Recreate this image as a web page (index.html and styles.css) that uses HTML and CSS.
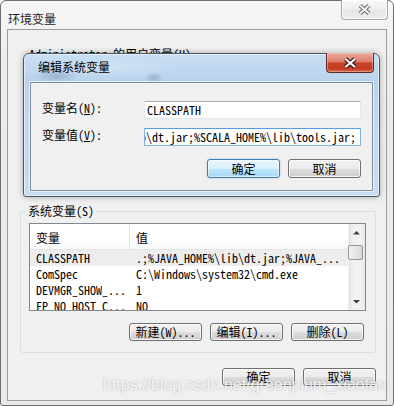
FILE: index.html
```html
<!DOCTYPE html>
<html lang="zh-CN">
<head>
  <meta charset="UTF-8" />
  <title>环境变量</title>
  <link rel="stylesheet" href="styles.css">
</head>
<body>

  <div class="window">
    <div class="titlebar">
      <span class="title">环境变量</span>
    </div>
    <span class="close-btn inactive">
      <svg width="47" height="20" viewBox="0 0 47 20">
        <path d="M19 5.5 L28 13.5 M28 5.5 L19 13.5" stroke="#6f6f6f" stroke-width="4.2" />
        <path d="M19 5.5 L28 13.5 M28 5.5 L19 13.5" stroke="#f2f2f2" stroke-width="2" />
      </svg>
    </span>

    <div class="client">
      <div class="user-group">Administrator 的用户变量(U)</div>

      <fieldset class="group">
        <legend>系统变量(S)</legend>
        <div class="listview">
          <div class="list-body">
            <div class="list-head">
              <span class="col-name">变量</span>
              <span class="col-value">值</span>
            </div>
            <div class="row selected">
              <span class="col-name">CLASSPATH</span>
              <span class="col-value">.;%JAVA_HOME%\lib\dt.jar;%JAVA_...</span>
            </div>
            <div class="row">
              <span class="col-name">ComSpec</span>
              <span class="col-value">C:\Windows\system32\cmd.exe</span>
            </div>
            <div class="row">
              <span class="col-name">DEVMGR_SHOW_...</span>
              <span class="col-value">1</span>
            </div>
            <div class="row">
              <span class="col-name">FP_NO_HOST_C...</span>
              <span class="col-value">NO</span>
            </div>
          </div>
          <div class="scrollbar">
            <div class="arrow">
              <svg width="17" height="17" viewBox="0 0 17 17"><path d="M5 10.5 L8.5 7 L12 10.5 Z" fill="#404040" /></svg>
            </div>
            <div class="thumb"></div>
            <div class="track"></div>
            <div class="arrow">
              <svg width="17" height="17" viewBox="0 0 17 17"><path d="M5 7 L8.5 10.5 L12 7 Z" fill="#404040" /></svg>
            </div>
          </div>
        </div>
        <div class="group-buttons">
          <button class="btn">新建(W)...</button>
          <button class="btn">编辑(I)...</button>
          <button class="btn">删除(L)</button>
        </div>
      </fieldset>

      <div class="dialog-buttons">
        <button class="btn">确定</button>
        <button class="btn">取消</button>
      </div>
    </div>

    <!-- Edit dialog on top of the main window -->
    <div class="edit-dialog">
      <div class="edit-titlebar">编辑系统变量</div>
      <span class="close-btn active">
        <svg width="48" height="20" viewBox="0 0 48 20">
          <path d="M19.5 6 L29 14 M29 6 L19.5 14" stroke="#3b1a14" stroke-width="4.4" />
          <path d="M19.5 6 L29 14 M29 6 L19.5 14" stroke="#ffffff" stroke-width="2.2" />
        </svg>
      </span>
      <div class="edit-client">
        <div class="field">
          <label>变量名(<u>N</u>):</label>
          <div class="textbox">CLASSPATH</div>
        </div>
        <div class="field">
          <label>变量值(<u>V</u>):</label>
          <div class="textbox focused"><span>.;%JAVA_HOME%\lib\dt.jar;%JAVA_HOME%\lib\tools.jar;%SCALA_HOME%\lib\dt.jar;%SCALA_HOME%\lib\tools.jar;</span></div>
        </div>
        <div class="edit-buttons">
          <button class="btn default">确定</button>
          <button class="btn">取消</button>
        </div>
      </div>
    </div>

    <div class="watermark">https://blog.csdn.net/greenplum_xiaofan</div>
  </div>

</body>
</html>
```

FILE: styles.css
```css
* {
  box-sizing: border-box;
}

body {
  margin: 0;
  width: 394px;
  height: 406px;
  overflow: hidden;
  background: #fff;
  font-family: "Noto Sans Mono CJK SC", "Noto Sans CJK SC", monospace;
  font-size: 12px;
  color: #000;
}

.window {
  position: relative;
  width: 394px;
  height: 406px;
  border: 1px solid #6e6e6e;
  border-radius: 6px 6px 3px 3px;
  padding: 0 6px 4px;
  background: linear-gradient(#f8f8f8, #ececec 60px, #e9e9e9);
  display: flex;
  flex-direction: column;
}

.titlebar {
  height: 28px;
  flex: none;
  padding: 9px 0 0 1px;
}

.title {
  font-family: "Noto Sans CJK SC", sans-serif;
  line-height: 12px;
  color: #1e1e1e;
}

.close-btn {
  position: absolute;
  top: -1px;
  right: 5px;
  height: 20px;
  border-radius: 0 0 4px 4px;
}

.close-btn svg {
  display: block;
  margin-left: -1px;
}

.close-btn.inactive {
  width: 47px;
  border: 1px solid #a5a5a5;
  border-top: none;
  background: linear-gradient(#f9f9f9, #ececec 50%, #e4e4e4 51%, #ededed);
  box-shadow: inset 0 0 0 1px rgba(255, 255, 255, 0.8);
}

.close-btn.active {
  width: 48px;
  border: 1px solid #5b2a22;
  border-top: none;
  background: linear-gradient(#e9ab9d, #dc806b 45%, #c9442b 52%, #c33a22 80%, #d5664a);
  box-shadow: inset 0 0 0 1px rgba(255, 210, 200, 0.45);
}

.client {
  flex: 1;
  border: 1px solid #9d9d9d;
  background: #f0f0f0;
  display: flex;
  flex-direction: column;
  padding: 0 10px 0 12px;
}

.user-group {
  margin-top: 18px;
  height: 156px;
  padding-left: 9px;
  line-height: 12px;
  white-space: nowrap;
}

.group {
  margin: 0;
  min-width: 0;
  padding: 5px 9px 11px 8px;
  border: 1px solid #d5dfe5;
  border-radius: 3px;
}

.group legend {
  margin-left: -3px;
  padding: 0 2px;
  line-height: 14px;
}

.listview {
  height: 88px;
  border: 1px solid #828790;
  background: #fff;
  display: flex;
  overflow: hidden;
}

.list-body {
  flex: 1;
  min-width: 0;
}

.list-head {
  height: 26px;
  display: flex;
  border-bottom: 1px solid #e5e5e5;
  background: linear-gradient(#fff, #fff 60%, #f7f8f9);
}

.list-head span {
  padding-top: 8px;
  line-height: 12px;
}

.list-head .col-name {
  border-right: 1px solid #e5e5e5;
}

.col-name {
  flex: 0 0 100px;
  padding-left: 6px;
  white-space: nowrap;
}

.col-value {
  flex: 1;
  padding-left: 6px;
  white-space: nowrap;
  overflow: hidden;
}

.row {
  height: 16px;
  line-height: 16px;
  display: flex;
}

.row.selected {
  background: #ededed;
}

.scrollbar {
  flex: 0 0 17px;
  display: flex;
  flex-direction: column;
  background: linear-gradient(to right, #e3e3e3, #f2f2f2 30%, #f2f2f2 70%, #e8e8e8);
  border-left: 1px solid #f0f0f0;
}

.scrollbar .arrow {
  height: 17px;
  flex: none;
}

.scrollbar svg {
  display: block;
  margin-left: -1px;
}

.thumb {
  height: 15px;
  margin: 4px 2px 0 -1px;
  border: 1px solid #979797;
  border-radius: 2px;
  background: linear-gradient(to right, #f3f3f3, #e6e6e6 50%, #d8d8d8);
}

.track {
  flex: 1;
}

.group-buttons {
  display: flex;
  justify-content: flex-end;
  gap: 8px;
  margin-top: 12px;
  padding-right: 2px;
}

.dialog-buttons {
  display: flex;
  justify-content: flex-end;
  gap: 8px;
  margin-top: 15px;
}

.btn {
  width: 73px;
  height: 18px;
  padding: 0;
  font-family: inherit;
  font-size: 12px;
  line-height: 14px;
  color: #000;
  border: 1px solid #707070;
  border-radius: 3px;
  background: linear-gradient(#f2f2f2, #ebebeb 50%, #dddddd 50%, #cfcfcf);
  box-shadow: inset 0 0 0 1px rgba(255, 255, 255, 0.75);
}

.btn.default {
  border-color: #3c7fb1;
  background: linear-gradient(#eaf6fd, #d9f0fc 50%, #bee6fd 50%, #a7d9f5);
  box-shadow: inset 0 0 0 1px rgba(255, 255, 255, 0.6), 0 0 2px rgba(60, 127, 177, 0.5);
}

.edit-dialog {
  position: absolute;
  left: 22px;
  top: 52px;
  width: 357px;
  height: 144px;
  border: 1px solid #4b5866;
  border-radius: 6px 6px 3px 3px;
  padding: 0 6px 5px;
  background:
    radial-gradient(ellipse 22px 7px at 32px 22px, rgba(90, 120, 150, 0.35), transparent),
    radial-gradient(ellipse 10px 6px at 130px 24px, rgba(90, 120, 150, 0.35), transparent),
    radial-gradient(ellipse 60px 10px at 90px 14px, rgba(255, 255, 255, 0.25), transparent),
    linear-gradient(#c9def4, #b9d3ec 28px, #c1d8ef 60px, #c8dcf1);
  box-shadow: inset 0 0 0 1px rgba(255, 255, 255, 0.55), 0 0 6px rgba(0, 0, 0, 0.3);
}

.edit-titlebar {
  height: 28px;
  padding: 7px 0 0 8px;
  font-family: "Noto Sans CJK SC", sans-serif;
  line-height: 12px;
}

.edit-client {
  height: 109px;
  border: 1px solid #7f8f9f;
  background: #f0f0f0;
  padding: 18px 11px 0 11px;
  box-shadow: 0 0 0 1px rgba(255, 255, 255, 0.6);
}

.field {
  display: flex;
  height: 18px;
}

.field + .field {
  margin-top: 9px;
}

.field label {
  flex: 0 0 102px;
  padding-top: 1px;
  line-height: 12px;
}

.textbox {
  width: 219px;
  height: 18px;
  padding: 0 2px;
  line-height: 16px;
  white-space: nowrap;
  overflow: hidden;
  background: #fff;
  border: 1px solid #e3e9ef;
  border-top-color: #abadb3;
}

.textbox.focused {
  display: flex;
  justify-content: flex-end;
  padding-right: 4px;
  border-color: #7eb4ea;
  border-top-color: #569de5;
}

.edit-buttons {
  display: flex;
  justify-content: flex-end;
  gap: 8px;
  margin-top: 13px;
}

.edit-buttons .btn {
  height: 19px;
}

.watermark {
  position: absolute;
  left: 102px;
  top: 376px;
  font-family: "Liberation Sans", Arial, sans-serif;
  font-size: 16px;
  line-height: 16px;
  color: rgba(255, 255, 255, 0.85);
  text-shadow: 0 0 2px rgba(0, 0, 0, 0.3);
  white-space: nowrap;
}
```
